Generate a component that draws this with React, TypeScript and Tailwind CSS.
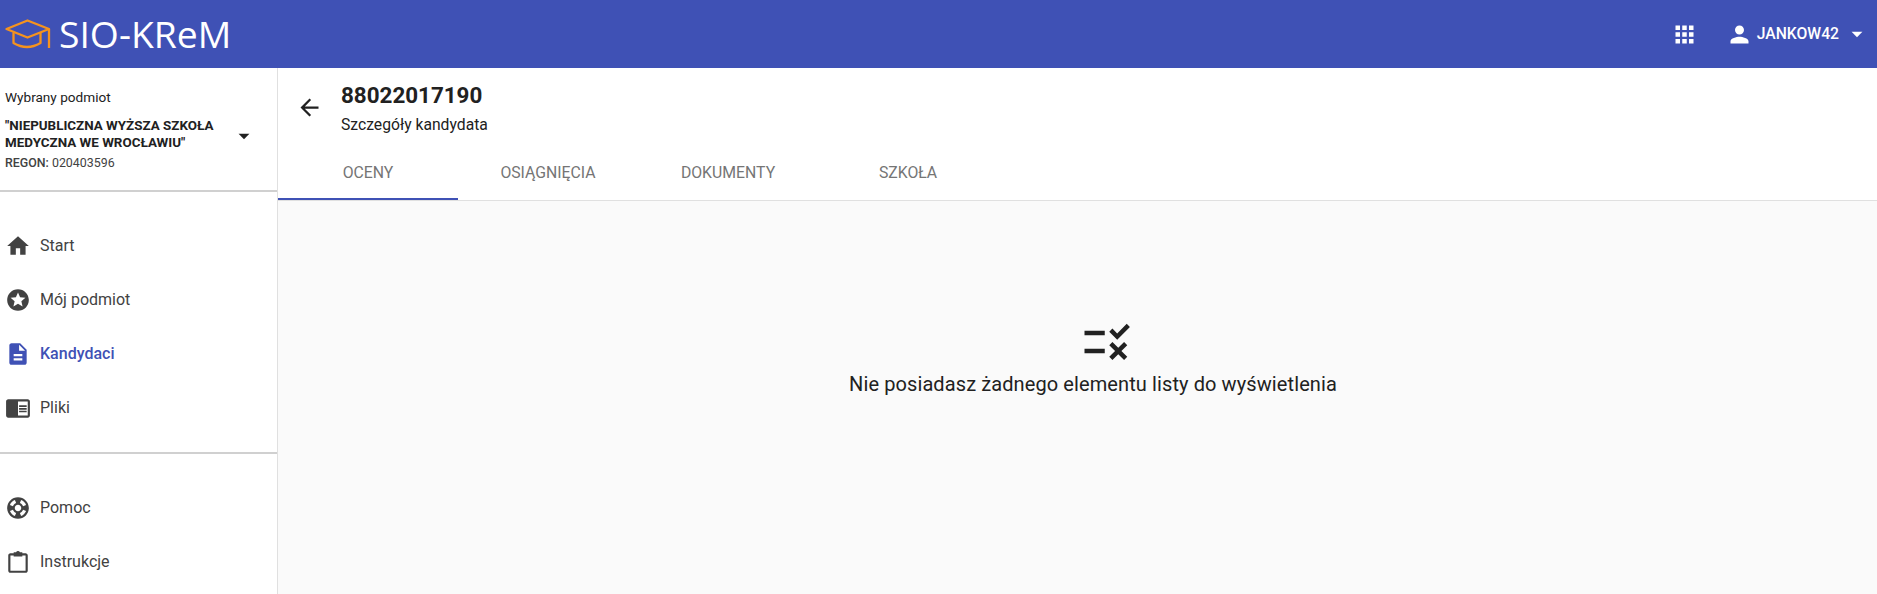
const Icon = ({ d, className }: { d: string; className: string }): JSX.Element => (
  <svg viewBox="0 0 24 24" fill="currentColor" className={className}>
    <path d={d} />
  </svg>
);

const icons = {
  home: "M10 20v-6h4v6h5v-8h3L12 3 2 12h3v8z",
  star: "M11.99 2C6.47 2 2 6.48 2 12s4.47 10 9.99 10C17.52 22 22 17.52 22 12S17.52 2 11.99 2zm4.24 16L12 15.45 7.77 18l1.12-4.81-3.73-3.23 4.92-.42L12 5l1.92 4.53 4.92.42-3.73 3.23L16.23 18z",
  doc: "M14 2H6c-1.1 0-1.99.9-1.99 2L4 20c0 1.1.89 2 1.99 2H18c1.1 0 2-.9 2-2V8l-6-6zm2 16H8v-2h8v2zm0-4H8v-2h8v2zm-3-5V3.5L18.5 9H13z",
  reader: "M13 12h7v1.5h-7zm0-2.5h7V11h-7zm0 5h7V16h-7zM21 4H3c-1.1 0-2 .9-2 2v13c0 1.1.9 2 2 2h18c1.1 0 2-.9 2-2V6c0-1.1-.9-2-2-2zm0 15h-9V6h9v13z",
  support: "M12 2C6.48 2 2 6.48 2 12s4.48 10 10 10 10-4.48 10-10S17.52 2 12 2zm7.46 7.12l-2.78 1.15c-.51-1.36-1.58-2.44-2.95-2.94l1.15-2.78c2.1.8 3.77 2.47 4.58 4.57zM12 15c-1.66 0-3-1.34-3-3s1.34-3 3-3 3 1.34 3 3-1.34 3-3 3zM9.13 4.54l1.17 2.78c-1.38.5-2.47 1.59-2.98 2.97L4.54 9.13c.81-2.11 2.48-3.78 4.59-4.59zM4.54 14.87l2.78-1.15c.51 1.38 1.59 2.46 2.97 2.96l-1.17 2.78c-2.1-.81-3.77-2.48-4.58-4.59zm10.34 4.59l-1.15-2.78c1.37-.51 2.45-1.59 2.95-2.97l2.78 1.17c-.81 2.1-2.48 3.77-4.58 4.58z",
  clipboard: "M8 4H5c-1.1 0-2 .9-2 2v14c0 1.1.9 2 2 2h14c1.1 0 2-.9 2-2V6c0-1.1-.9-2-2-2h-3v2h3v14H5V6h3V4zM8 3h2.2a2 2 0 0 1 3.6 0H16v4H8V3z",
  apps: "M4 8h4V4H4v4zm6 12h4v-4h-4v4zm-6 0h4v-4H4v4zm0-6h4v-4H4v4zm6 0h4v-4h-4v4zm6-10v4h4V4h-4zm-6 4h4V4h-4v4zm6 6h4v-4h-4v4zm0 6h4v-4h-4v4z",
  person: "M12 12c2.21 0 4-1.79 4-4s-1.79-4-4-4-4 1.79-4 4 1.79 4 4 4zm0 2c-2.67 0-8 1.34-8 4v2h16v-2c0-2.66-5.33-4-8-4z",
  back: "M20 11H7.83l5.59-5.59L12 4l-8 8 8 8 1.41-1.41L7.83 13H20v-2z",
  rule: "M16.54 11L13 7.46l1.41-1.41 2.12 2.12 4.24-4.24 1.41 1.41L16.54 11zM11 7H2v2h9V7zm10 6.41L19.59 12 17 14.59 14.41 12 13 13.41 15.59 16 13 18.59 14.41 20 17 17.41 19.59 20 21 18.59 18.41 16 21 13.41zM11 15H2v2h9v-2z",
  caret: "M7 10l5 5 5-5z",
};

const NavItem = ({ icon, label, active }: { icon: string; label: string; active?: boolean }): JSX.Element => (
  <div className={`flex h-[54px] items-center gap-[9px] pl-[5px] text-[16px] ${active ? "font-medium text-[#3f51b5]" : "text-[#424242]"}`}>
    <Icon d={icon} className="h-[26px] w-[26px] shrink-0" />
    <span>{label}</span>
  </div>
);

const Tab = ({ label, active }: { label: string; active?: boolean }): JSX.Element => (
  <div className={`flex h-full w-[180px] items-center justify-center border-b-2 pt-[1px] text-[15.8px] text-[#757575] ${active ? "border-[#3f51b5]" : "border-transparent"}`}>
    {label}
  </div>
);

export default function App(): JSX.Element {
  return (
    <div className="flex h-[594px] flex-col overflow-hidden bg-white font-['Roboto',sans-serif]">
      <header className="flex h-[68px] shrink-0 items-center justify-between bg-[#3f51b5] pl-[5px] pr-[7px] text-white">
        <div className="flex items-center gap-[8px]">
          <svg viewBox="0 0 46 30" fill="none" stroke="#f5931e" strokeWidth="2.3" strokeLinejoin="round" className="h-[30px] w-[46px]">
            <path d="M1.5 10L22.5 1.5 44 10 22.5 18.5 1.5 10z" />
            <path d="M8.5 13.5V24Q22 32 35.5 24V13.5" />
            <path d="M44 10V29" />
          </svg>
          <span className="font-['Open_Sans',sans-serif] text-[37.3px] leading-none">SIO-KReM</span>
        </div>
        <div className="flex items-center">
          <Icon d={icons.apps} className="h-[27px] w-[27px]" />
          <Icon d={icons.person} className="ml-[28px] h-[27px] w-[27px]" />
          <span className="ml-[4px] text-[15.7px] font-medium">JANKOW42</span>
          <Icon d={icons.caret} className="ml-[5px] h-[26px] w-[26px]" />
        </div>
      </header>

      <div className="flex min-h-0 flex-1">
        <aside className="w-[278px] shrink-0 border-r border-[#e0e0e0] text-[#212121]">
          <div className="flex h-[124px] items-center border-b-2 border-[#d0d0d0] pl-[5px] pr-[20px] pt-[1px]">
            <div className="w-[232px]">
              <div className="text-[13.6px] leading-[18px]">Wybrany podmiot</div>
              <div className="mt-[11px] text-[13.4px] font-bold leading-[17px]">
                "NIEPUBLICZNA WYŻSZA SZKOŁA MEDYCZNA WE WROCŁAWIU"
              </div>
              <div className="mt-[4px] text-[12.4px] leading-[16px] text-[#424242]">
                <span className="font-medium">REGON:</span> 020403596
              </div>
            </div>
            <Icon d={icons.caret} className="ml-[2px] mt-[13px] h-[26px] w-[26px] shrink-0" />
          </div>
          <nav className="pt-[27px]">
            <NavItem icon={icons.home} label="Start" />
            <NavItem icon={icons.star} label="Mój podmiot" />
            <NavItem icon={icons.doc} label="Kandydaci" active />
            <NavItem icon={icons.reader} label="Pliki" />
          </nav>
          <div className="mt-[17px] border-t-2 border-[#d0d0d0] pt-[27px]">
            <NavItem icon={icons.support} label="Pomoc" />
            <NavItem icon={icons.clipboard} label="Instrukcje" />
          </div>
        </aside>

        <main className="flex min-w-0 flex-1 flex-col">
          <div className="flex h-[79px] items-center pl-[18px]">
            <Icon d={icons.back} className="h-[27px] w-[27px] text-[#212121]" />
            <div className="ml-[18px]">
              <div className="text-[22.4px] font-bold leading-[28px] text-[#212121]">88022017190</div>
              <div className="mt-[6px] text-[15.7px] leading-[20px] text-[#212121]">Szczegóły kandydata</div>
            </div>
          </div>
          <div className="flex h-[54px] border-b border-[#e0e0e0]">
            <Tab label="OCENY" active />
            <Tab label="OSIĄGNIĘCIA" />
            <Tab label="DOKUMENTY" />
            <Tab label="SZKOŁA" />
          </div>
          <div className="flex flex-1 flex-col items-center bg-[#fafafa] pl-[31px] pt-[114px] text-[#212121]">
            <Icon d={icons.rule} className="ml-[27px] h-[54px] w-[54px]" />
            <div className="mt-[2px] text-[20px] leading-[26px] tracking-[0.1px]">Nie posiadasz żadnego elementu listy do wyświetlenia</div>
          </div>
        </main>
      </div>
    </div>
  );
}
